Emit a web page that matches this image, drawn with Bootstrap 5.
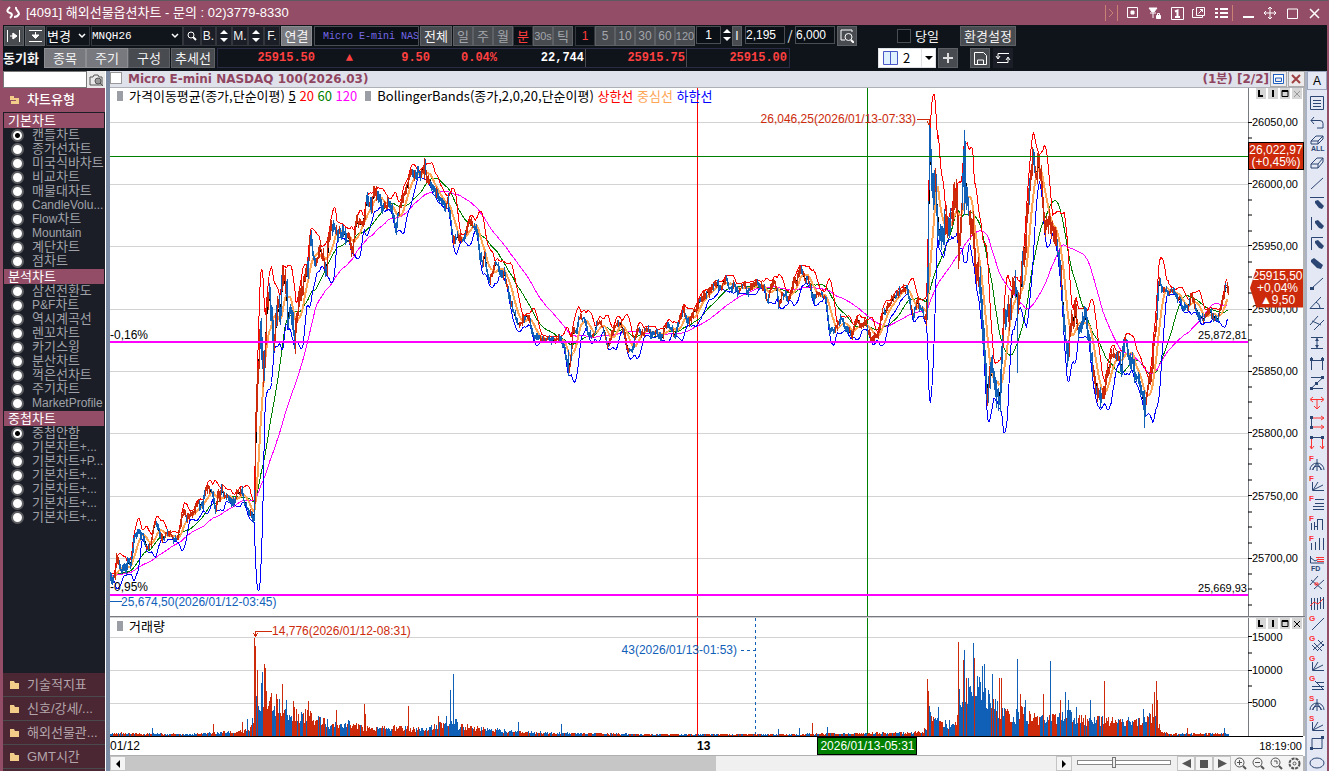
<!DOCTYPE html>
<html lang="ko">
<head>
<meta charset="utf-8">
<meta name="viewport" content="width=device-width, initial-scale=1">
<title>[4091] 해외선물옵션차트</title>
<link href="https://cdn.jsdelivr.net/npm/bootstrap@5.3.0/dist/css/bootstrap.min.css" rel="stylesheet">
<style>
:root{--plum:#944d66;--ink:#0f141b;--edge:#4a4d52;--navy:#2c4673;--red:#cc2a0a;--blue:#1060b8;}
body{font-family:"Liberation Sans","Noto Sans CJK KR",sans-serif;font-size:13px;line-height:14px;color:#000;background:#fff;height:100vh;overflow:hidden}
button,input,select{font:inherit;color:inherit;border-radius:0;padding:0;margin:0}
.app{height:100vh;border-top:1px solid #5c5a5e;border-left:3px solid var(--plum);border-right:2px solid var(--plum);background:var(--ink)}
.titlebar{height:24px;background:var(--plum);color:#fff;font-family:"Liberation Sans","Noto Sans CJK KR",sans-serif;margin-left:-3px;padding:0 2px 0 6px}
.titlebar button,.plain{background:none;border:0;display:flex;align-items:center;justify-content:center}
.titlebar button{width:22px;height:20px}
.titlebar .sep{width:1px;height:16px;background:#c98273}
.caption{margin-left:5px}
svg{display:block}
.tools{background:var(--ink);color:#f4f4f4;padding:1px 0 3px;font-family:"Noto Sans CJK KR",sans-serif}
.tools .bar{height:20px;display:flex;align-items:stretch;white-space:nowrap}
.tools .bar+.bar{margin-top:2px}
.tb{background:#484b50;border:1px solid #5d6065;color:#f4f4f4;height:20px;display:flex;align-items:center;justify-content:center;line-height:18px;flex:none}
.tb.lit{background:#77797e;border-color:#8c8e92}
.tb.dk{background:#1b1e26;border-color:#33363c}
.tb.dim{color:#a2a5aa}
.tb.sel{background:#0b1016;border-color:#34373c;color:#ff3d3d}
.tb.bare{background:#1b1e26;border:0}
.fld{background:#0b1016;border:1px solid var(--edge);color:#fff;height:18px;flex:none;min-width:0}
.fld.issue{color:#7468e8;height:20px}
.tick-box{appearance:none;width:14px;height:14px}
.tools select{appearance:none;background:#10151c url("data:image/svg+xml,%3Csvg xmlns='http://www.w3.org/2000/svg' width='8' height='6'%3E%3Cpath d='M1 1l3 3 3-3' stroke='white' stroke-width='1.5' fill='none'/%3E%3C/svg%3E") no-repeat right 3px center;border:1px solid #34373c;color:#fff;height:20px}
.tools select.cnt{background:none;color:#000;border:0;width:18px;height:18px}
.mono{font-family:"Liberation Mono",monospace;font-size:12px}
.mono10{font-family:"Liberation Mono",monospace;font-size:10px}
.mono11{font-family:"Liberation Mono",monospace;font-size:11px}
.nar{font-family:"Liberation Sans",sans-serif;font-size:12px}
.nar11{font-family:"Liberation Sans",sans-serif;font-size:11px}
.z10{width:10px}.z15{width:15px}.z16{width:16px}.z18{width:18px}.z20{width:20px}.z25{width:25px}.z31{width:31px}.z32{width:32px}.z40{width:40px}.z42{width:42px}.z44{width:44px}.z56{width:56px}.z92{width:92px}.z105{width:105px}
.g1{margin-left:1px}.g2{margin-left:2px}.g3{margin-left:3px}.g12{margin-left:12px}.g40{margin-left:40px}.g88{margin-left:88px}
.cfg{margin-left:21px}
.quote{border:1px solid #2b2b45;color:#ff4040;font-weight:700;display:grid;grid-template-columns:98px 45px 70px 67px 88px 101px 101px;width:573px}
.quote span{text-align:right;padding-right:1px;line-height:18px}
.quote .cut{border-right:1px solid #4a4a50}
.main{display:grid;grid-template-columns:102px 5px minmax(0,1fr) 22px;flex:1;min-height:0}
.side{background:#1b1e27;min-height:0;overflow:hidden;font-family:"Liberation Sans","Noto Sans CJK KR",sans-serif}
.side input[type=text]{width:84px;height:17px;border:1px solid #777;background:#fff}
.cam{width:18px;height:17px;background:#e9e9e9;border:0}
.cat{height:24px;background:var(--plum);color:#fff;font-weight:500;padding-left:6px}
.grp{height:15px;margin:1px 1px 0;background:var(--plum);color:#fff;padding-left:4px;line-height:15px;font-size:13px;font-weight:400}
.opt{height:14px;line-height:14px;color:#a0a2a9;padding-left:8px;display:flex;align-items:center;white-space:nowrap}
.opt .la{font-size:12px}
.opt input{appearance:none;width:13px;height:13px;flex:none;border-radius:50%;border:2px solid #5d5f62;background:#fff;margin-right:8px}
.opt input:checked{background:radial-gradient(circle,#000 0 2px,#fff 3px)}
.fold{height:24px;width:100%;border:0;border-bottom:1px solid #4a4a4c;background:#4b2734;color:#b3a5aa;text-align:left;padding-left:6px;display:flex;align-items:center;white-space:nowrap}
.fold svg,.cat svg{margin-right:6px}
.fold-end{height:2px;background:#4b2734}
.split{background:linear-gradient(90deg,#fff 0 1px,#7b8ba3 1px)}
.chartcol{background:#fff;min-width:0;min-height:0}
.chead{height:17px;background:#dfe1eb;border-bottom:1px solid #aeb0b5;color:#8f4560;font:700 12px/16px "DejaVu Sans","Noto Sans CJK KR",sans-serif}
.chead input{appearance:none;width:12px;height:12px;background:#fff;border:1px solid #999;margin:1px 6px 0 0}
.chead button{width:17px;height:16px;border:1px solid #aaa;background:#eceaea;margin-left:1px}
.pane{display:grid;grid-template-columns:minmax(0,1fr) 56px;min-height:0}
.pane.pr{flex:528 1 0}.pane.vo{flex:118 1 0}
.plot{position:relative;min-width:0;min-height:0;border-right:1px solid #777a80;overflow:hidden}
.plot>svg{position:absolute;inset:0;width:100%;height:100%;shape-rendering:crispEdges}
.ax{position:relative;font:12px/12px "Liberation Sans",sans-serif;border-right:2px solid #b5b5b5}
.ax .tick{position:absolute;left:-1px;display:flex;align-items:center;font-size:11px;transform:translateY(-50%)}
.ax .tick::before{content:"";width:4px;height:1px;background:#000}
.tag{position:absolute;white-space:nowrap;font:12px/12px "Liberation Sans",sans-serif;transform:translateY(-50%)}
.tag.sm{font-size:11px}
.tag.end{transform:translate(-100%,-50%)}
.keyline{position:absolute;white-space:nowrap;font:13px/16px "Noto Sans CJK KR",sans-serif;top:0;left:7px;display:flex;align-items:center}
.keyline i{width:6px;height:10px;background:#9c9ea6;margin-right:6px}
.px{position:absolute;left:-1px;width:56px;background:var(--red);color:#fff;text-align:center;font-size:12px;line-height:12px}
.px.hi{border:1px solid #000;height:28px;top:10.2%;padding-top:1px}
.px.now{height:39px;top:34.2%;clip-path:polygon(0 50%,12% 0,100% 0,100% 100%,12% 100%);left:1px;width:53px;padding-top:1px;padding-left:2px}
.mini{position:absolute;right:1px;top:0;display:flex;gap:2px}
.mini button{width:10px;height:11px;background:#d6d6d6;border:0}
.gap2px{height:2px;background:linear-gradient(#777a80 0 1px,#cfcfcf 1px)}
.taxis{height:20px;border-top:1px solid #000;border-bottom:1px solid #b0b0b0;position:relative;font:12px/18px "Liberation Sans",sans-serif;margin-right:2px;flex:none}
.taxis span,.taxis b{position:absolute;top:0}
.taxis .cur{background:#008000;color:#fff;border:1px solid #000;height:18px;line-height:17px;width:100px;text-align:center}
.foot{height:15px;background:#f0f0f0;border-right:2px solid #b5b5b5;flex:none}
.foot button{height:15px;border:1px solid #c4c4c4;background:#f4f4f4;flex:none}
.trk{background:#f0f0f0;flex:1}.thumb{width:63.4%;height:15px;background:#c6c6c6}
.foot input{appearance:none;width:94px;height:5px;margin:4px 6px 0 5px;border:1px solid #888;background:#fff}
.foot input::-webkit-slider-thumb{appearance:none;width:4px;height:11px;background:#eee;border:1px solid #777}
.rail{background:#e3e8f4;border-left:2px solid #a9b3c4;overflow:hidden}
.rail button{width:20px;height:20px;border:0;background:none;display:flex;align-items:center;justify-content:center}
.rail .first{height:19px;border:1px solid #9aa5bd;margin-bottom:3px;font:12px/14px "Liberation Sans",sans-serif}
</style>
</head>
<body>
<div class="app d-flex flex-column">
<header class="titlebar d-flex align-items-center flex-shrink-0">
<svg width="15" height="14" viewBox="0 0 15 14" fill="none" stroke="#fff" stroke-width="2"><path d="M4 1C0 5 1 6 4 7s2 3 0 5M10 1c-1 3 3 4 3 7-1 2-3 3-5 3"/></svg>
<span class="caption me-auto">[4091] 해외선물옵션차트 - 문의 : 02)3779-8330</span>
<span class="sep"></span><svg width="11" height="10" fill="none" stroke="#c98273"><path d="M3 1l4 4-4 4"/></svg><span class="sep me-1"></span>
<button aria-label="고정"><svg width="12" height="12" fill="none" stroke="#fff"><path d="M.5 .5h10v10h-10z"/><path fill="#fff" d="M4 4h3v3H4z"/></svg></button>
<button aria-label="잠금"><svg width="14" height="13" fill="#fff" stroke="#fff"><path d="M1 1h8L6 5H4zM2 6h6M5 6v5M8.5 8.500h4v3h-4z"/><path fill="none" d="M9.500 8V6.500h2V8"/></svg></button>
<button aria-label="화면 1"><svg width="13" height="13" fill="none" stroke="#fff"><path d="M.5 .5h12v12H.5z"/><path stroke-width="2" d="M4 4.500l2.500-1V10M4 10h5"/></svg></button>
<button aria-label="새 창"><svg width="14" height="12" fill="none" stroke="#fff"><path d="M4.500 .5h8v8h-8zM2 2.500H.5v8h10V9M6.500 6.500l4-4M8 2.500h2.500V5"/></svg></button>
<button aria-label="메뉴"><svg width="13" height="11" stroke="#fff" stroke-width="2"><path d="M0 1h3M5 1h8M0 5h3M5 5h8M0 9h3M5 9h8"/></svg></button>
<span class="sep"></span>
<button class="ms-1" aria-label="최소화"><svg width="11" height="11" stroke="#fff" stroke-width="2"><path d="M0 9h11"/></svg></button>
<button aria-label="이동"><svg width="12" height="12" fill="none" stroke="#fff"><path d="M6 0v12M0 6h12M4 2l2-2 2 2M4 10l2 2 2-2M2 4L0 6l2 2M10 4l2 2-2 2"/></svg></button>
<button aria-label="최대화"><svg width="11" height="11" fill="none" stroke="#fff"><path d="M.5 1h10v9.500H.5z"/></svg></button>
<button aria-label="닫기"><svg width="11" height="11" stroke="#fff" stroke-width="1.500"><path d="M1 1l9 9M10 1l-9 9"/></svg></button>
</header>
<div class="tools flex-shrink-0">
<div class="bar">
<button class="tb z20 g1" aria-label="가로"><svg width="14" height="12" fill="none" stroke="#fff"><path d="M.5 0v12M12.500 0v12M3 6h7M6 3v6" /><path fill="#fff" d="M6 3l4 3-4 3z"/></svg></button>
<button class="tb z20 g1" aria-label="세로"><svg width="13" height="12" stroke="#fff"><path d="M0 .5h13M0 11.500h13M6.500 2v3"/><path fill="#fff" d="M3 5h7L6.500 8.500z"/></svg></button>
<select class="z44 g1" aria-label="변경"><option>변경</option></select>
<select class="z92 g1 mono11" aria-label="종목코드"><option>MNQH26</option></select>
<button class="tb dk z18" aria-label="검색"><svg width="10" height="10" fill="none" stroke="#fff"><circle cx="4" cy="4" r="3"/><path stroke-width="2" d="M6 6l3 3"/></svg></button>
<button class="tb dk z15 nar">B.</button>
<button class="tb dk z16" aria-label="증감"><svg width="10" height="14" fill="#fff"><path d="M1 5l4-4 4 4zM1 9h8l-4 4z"/></svg></button>
<button class="tb dk z16 nar">M.</button>
<button class="tb dk z16" aria-label="증감"><svg width="10" height="14" fill="#fff"><path d="M1 5l4-4 4 4zM1 9h8l-4 4z"/></svg></button>
<button class="tb dk z16 nar">F.</button>
<button class="tb lit z31 g1">연결</button>
<input class="fld issue z105 g2 mono10 ps-2" value="Micro E-mini NASDAQ" aria-label="종목명">
<button class="tb z32 g1">전체</button><button class="tb dim z20 g1">일</button><button class="tb dim z20">주</button><button class="tb dim z20">월</button><button class="tb sel z20">분</button><button class="tb dim z20 nar11">30s</button><button class="tb dim z20">틱</button>
<button class="tb sel z20 g2 nar">1</button><button class="tb dim z20 nar">5</button><button class="tb dim z20 nar">10</button><button class="tb dim z20 nar">30</button><button class="tb dim z20 nar">60</button><button class="tb dim z20 nar11">120</button>
<input class="fld z25 g1 nar text-center" value="1" aria-label="간격">
<svg class="flex-shrink-0" width="11" height="18" fill="#fff"><path d="M2 7l4-4 4 4zM2 11h8l-4 4z"/></svg>
<button class="tb z10 nar">I</button>
<input class="fld z40 g3 nar" value="2,195" aria-label="조회 봉 수"><span class="z10 text-center align-self-center">/</span><input class="fld z40 nar" value="6,000" aria-label="전체 봉 수">
<button class="tb z20 g2" aria-label="영역 보기"><svg width="14" height="14" fill="none" stroke="#fff"><path d="M12 3V1H1v10h4"/><circle cx="8.500" cy="8" r="3.500"/><path stroke-width="2" d="M11 11l3 3"/></svg></button>
<label class="d-flex align-items-center g40"><input type="checkbox" class="fld tick-box me-1">당일</label>
<button class="tb z56 cfg">환경설정</button>
</div>
<div class="bar">
<b class="z40 align-self-center">동기화</b>
<button class="tb lit z42 g1">종목</button><button class="tb lit z42">주기</button><button class="tb z42">구성</button><button class="tb z44 g1">추세선</button>
<div class="quote mono g2"><span>25915.50</span><span class="pe-2">▲</span><span>9.50</span><span>0.04%</span><span class="cut text-white">22,744</span><span class="cut">25915.75</span><span>25915.00</span></div>
<span class="d-flex g88 bg-white text-black align-items-center border"><svg class="mx-1" width="16" height="14" fill="#dff0ff" stroke="#4a58c8"><path d="M.5 .5h14v13H.5zM7.500 0v14"/></svg><select class="cnt" aria-label="분할"><option>2</option></select><svg class="border-start h-100" width="14" height="18" fill="#000"><path d="M3 7h8l-4 4z"/></svg></span>
<button class="tb z20 g2" aria-label="추가"><svg width="12" height="12" stroke="#ddd" stroke-width="2"><path d="M6 1v10M1 6h10"/></svg></button>
<button class="tb z20 g12" aria-label="저장"><svg width="13" height="13" fill="none" stroke="#fff"><path d="M.5 .5h9l3 3v9H.5zM3.500 12V8h6v4"/></svg></button>
<button class="tb bare z20 g3" aria-label="동기"><svg width="16" height="14" fill="none" stroke="#fff"><path d="M14 2.500H3v5M1 5l2 3 2-3M2 11.500h11v-5M11 9l2-3 2 3"/></svg></button>
</div>
</div>
<div class="main">
<aside class="side d-flex flex-column">
<div class="d-flex"><input type="text" aria-label="지표 검색"><button class="cam plain" aria-label="지표 찾기"><svg width="16" height="14" fill="none" stroke="#555"><path d="M2 4h3l1-2h4l1 2h3v8H2z"/><circle cx="10" cy="8" r="3" fill="#999"/><path d="M12 10l3 3"/></svg></button></div>
<div class="cat d-flex align-items-center"><svg width="12" height="10" fill="#f2cc88"><path d="M1 1h4v2h5v6H2V6h5V5H1z"/></svg>차트유형</div>
<div id="lists"></div>
<div class="mt-auto" id="folds"></div>
</aside>
<div class="split"></div>
<section class="chartcol d-flex flex-column">
<div class="chead d-flex flex-shrink-0"><input type="checkbox" aria-label="차트 선택"><span class="me-auto">Micro E-mini NASDAQ 100(2026.03)</span><span>(1분) [2/2]</span>
<button class="plain g3" aria-label="창 복원"><svg width="13" height="12" fill="#fff" stroke="#1f5fc0"><path d="M1 1.500h11M1.500 2v8.500h10V2M3.500 5h6v3.500h-6z"/></svg></button><button class="plain" aria-label="창 닫기"><svg width="11" height="11" stroke="#a04040" stroke-width="2"><path d="M1 1l8 8M9 1l-8 8"/></svg></button></div>
<div class="pane pr"><div class="plot" id="price">
<div class="keyline"><i></i>가격이동평균(종가,단순이평)&nbsp;<u>5</u>&nbsp;<span style="color:red">20</span>&nbsp;<span style="color:green">60</span>&nbsp;<span style="color:#f0f">120</span><i class="ms-2"></i><span>BollingerBands</span>(종가,2,0,20,단순이평)&nbsp;<span style="color:red">상한선</span>&nbsp;<span style="color:#ffa555">중심선</span>&nbsp;<span style="color:#00f">하한선</span></div>
</div><div class="ax" id="pax"><div class="px hi">26,022,97<br>(+0,45%)</div><div class="px now">25915,50<br>+0,04%<br>▲9,50</div></div></div>
<div class="gap2px flex-shrink-0"></div>
<div class="pane vo"><div class="plot" id="vol"><div class="keyline"><i></i>거래량</div></div><div class="ax" id="vax"></div></div>
<div class="taxis"><span style="left:0">01/12</span><b style="left:49.200%">13</b><span class="cur" style="left:59.300%">2026/01/13-05:31</span><span class="nar11" style="right:1px">18:19:00</span></div>
<div class="foot d-flex">
<button class="z16 plain" aria-label="왼쪽"><svg width="6" height="8"><path d="M5 0v8L1 4z"/></svg></button>
<div class="trk"><div class="thumb"></div></div>
<button class="z16 plain" aria-label="오른쪽"><svg width="6" height="8"><path d="M1 0v8l4-4z"/></svg></button>
<input type="range" min="0" max="100" value="39" aria-label="배율">
<button class="z18 plain" aria-label="뒤로"><svg width="9" height="9" fill="#555"><path d="M9 0v9L0 4.500z"/></svg></button><button class="z18 plain" aria-label="정지"><svg width="8" height="8" fill="#555"><path d="M0 0h8v8H0z"/></svg></button><button class="z18 plain" aria-label="앞으로"><svg width="9" height="9" fill="#555"><path d="M0 0v9l9-4.500z"/></svg></button>
<button class="z18 plain border-0" aria-label="확대"><svg width="13" height="13" fill="none" stroke="#555"><circle cx="5.500" cy="5.500" r="4.500"/><path d="M3 5.500h5M5.500 3v5"/><path stroke-width="2" d="M9 9l3 3"/></svg></button><button class="z18 plain border-0" aria-label="축소"><svg width="13" height="13" fill="none" stroke="#555"><circle cx="5.500" cy="5.500" r="4.500"/><path d="M3 5.500h5"/><path stroke-width="2" d="M9 9l3 3"/></svg></button><button class="z18 plain border-0" aria-label="원래대로"><svg width="13" height="13" fill="none" stroke="#555"><circle cx="5.500" cy="5.500" r="4.500"/><path d="M4 4h3v3"/><path stroke-width="2" d="M9 9l3 3"/></svg></button><button class="z18 plain border-0" aria-label="설정"><svg width="13" height="13" fill="none" stroke="#555"><circle cx="6.500" cy="6.500" r="5" stroke-width="2" stroke-dasharray="3 1"/><circle cx="6.500" cy="6.500" r="1.500"/></svg></button>
</div>
</section>
<nav class="rail" id="rail" aria-label="그리기 도구"><button class="first">A</button></nav>
</div>
</div>
<script src="https://cdn.jsdelivr.net/npm/bootstrap@5.3.0/dist/js/bootstrap.bundle.min.js"></script>
<script>
const groups=[["기본차트",["캔들차트","종가선차트","미국식바차트","비교차트","매물대차트","CandleVolu...","Flow차트","Mountain","계단차트","점차트"]],["분석차트",["삼선전환도","P&F차트","역시계곡선","렌꼬차트","카기스윙","분산차트","꺽은선차트","주기차트","MarketProfile"]],["중첩차트",["중첩안함","기본차트+...","기본차트+P...","기본차트+...","기본차트+...","기본차트+...","기본차트+..."]]];
lists.innerHTML=groups.map(([g,o],i)=>`<h2 class="grp mb-0">${g}</h2>`+o.map((t,j)=>`<label class="opt"><input type="radio" name="g${i}"${j==0&&i!=1?' checked':''}><span>${t.replace('&','&amp;').replace(/[A-Za-z&;.+]+/g,'<span class="la">$&</span>')}</span></label>`).join('')).join('');
folds.innerHTML=["기술적지표","신호/강세/...","해외선물관...","GMT시간"].map(t=>`<button class="fold"><svg width="12" height="10" fill="#f2cc88"><path d="M1 1h4l1 2h4v6H1z"/></svg>${t}</button>`).join('')+'<div class="fold-end"></div>';

/* drawing tools: n = navy strokes, r = red strokes, t = letter, f = navy fill, b = letter below */
const fan="M1 15a7 7 0 0 1 14 0M4 15a4 4 0 0 1 8 0M8 4v12M8 8L3 15M8 8l5 7", rays="M3.500 7v8.500H15M4 15l5-8M4 15l10-5";
const pen="M6 6l3-1 6 6-2 3-3-1-4-5z";
const icons=[{n:"M1.500 1.500h13v13h-13zM4 5.500h8M4 8.500h8M4 11.500h8"},{n:"M2 5.500h9q3 0 3 3v4.500H8M5 2L2 5.500 5 9"},{n:"M2 6l5-5h7l-5 5zM2 6v3h7V6M9 9l5-5V1",t:"ALL",b:1},{n:"M2 9l6-6h6l-5 6zM2 9v4h7V9M9 13l5-6V3"},{n:"M2 14L14 3"},{n:"M1 2.500h14",f:pen},{n:"M2.500 2v13",f:pen},{n:"M2.500 15V2.500H14",f:pen},{f:"M2 5l3-2 9 7-2 4-4-1-6-6z"},{n:"M3 13L14 3",f:"M1 12h4v3H1z"},{n:"M15 13.500H1L12 2M7 7q4 2 4 6"},{n:"M1 10l8-9M5 15L15 5M3 6l9 4"},{n:"M2 2.500h12M2 13.500h12M8 3v10",f:"M6 6l2-3 2 3zM6 10l2 3 2-3z"},{n:"M2.500 2v13M13.500 2v13M3 5.500h10",f:"M1 3h3v3H1zM12 3h3v3h-3z"},{n:"M2 2.500h12L2 13.500h12",f:"M12 1h3v3h-3zM1 12h3v3H1zM6 7h3v3H6z"},{r:"M2 4.500h12M8 4v10M4 2L1 4.500 4 7M12 2l3 2.500L12 7M5 11l3 3 3-3"},{n:"M2.500 2v12",r:"M4 3h11M4 12h11M12 1l3 2-3 2M12 10l3 2-3 2",f:"M1 1h3v3H1zM1 11h3v3H1z"},{n:"M3 2.500h10",r:"M2.500 4v10M13.500 4v10M1 11l1.500 3L5 11M11 11l2.500 3 1.500-3",f:"M1 1h3v3H1zM12 1h3v3h-3z"},
{n:fan,t:"F"},{n:rays,t:"F"},{n:"M6 4.500h9M6 8.500h9M4 11.500h11M4 14.500h11",t:"F"},{n:"M2.500 8v7M5.500 7v8M5 11.500h4M8.500 4v11M8 4.500h5M13.500 4v11",t:"F"},{n:"M2.500 8v7M6.500 7v8M10.500 3v12M14.500 3v12",t:"F"},{n:"M1.500 1v7H15M2 3l4 3 4-2",r:"M7 2.500h8M8 6.500h7M8 4.500h7",t:"FD",b:1},{n:"M1 10l8-9M5 14L15 5M2 5l11 9",r:"M6 8h3v2H6z"},{n:"M2.500 3v12M5.500 3v12M8.500 3v12M11.500 2v12M14.500 2v12",r:"M1 11l4-4 4 2 5-5"},{n:"M3 15L15 3",t:"G"},{n:"M4 15L14 6M8 16l7-7M5 8l8 8M3 10l5 5M9 5l6 6",t:"G"},{n:rays,t:"G"},{n:"M7 7.500h8M3 11.500h12M3 14.500h12M6 6l8 8",t:"G"},{n:fan,t:"S"},{n:rays,t:"S"},{n:"M3 3.500h10v10H3z",f:"M1 12h3v3H1zM12 1h3v3h-3z"},{n:"M1 8a7 5 0 1 0 14 0a7 5 0 1 0-14 0"}];
rail.insertAdjacentHTML('beforeend',icons.map((o,i)=>`<button aria-label="도구 ${i+1}"><svg width="16" height="17" viewBox="0 0 16 17" fill="none"><path d="${o.n||''}" stroke="#2c4673"/><path d="${o.r||''}" stroke="#f33"/><path d="${o.f||''}" fill="#2c4673"/>${o.t?`<text x="${o.b?2:0}" y="${o.b?16:6}" font-size="${o.b?7:8}" font-weight="700" font-family="Liberation Sans,sans-serif" fill="${o.b?'#2c4673':'#f33'}">${o.t}</text>`:''}</svg></button>`).join(''));

/* closing path as x,y pairs; X0,Y0 is the plot origin of those values */
const X0=110,Y0=88;
const P="30,575 70,578 80,572 95,574 110,578 112,580 114,574 116,556 118,563 121,572 123,566 125,571 127,560 129,566 131,558 133,537 136,534 138,531 140,537 142,533 144,541 147,550 150,545 152,535 154,522 157,528 160,536 163,540 165,533 168,538 170,533 173,539 176,540 178,533 181,514 184,512 186,518 189,514 192,513 195,507 197,501 199,505 202,508 204,492 207,488 210,491 212,494 215,512 217,492 219,500 221,489 224,498 227,494 230,502 233,503 236,492 238,495 241,492 243,500 246,506 249,513 251,516 253,522 254,518 255,433 256,400 258,357 260,327 262,367 263,380 265,340 266,300 268,297 271,307 273,337 275,327 278,300 279,317 281,293 283,273 286,293 287,327 289,307 292,323 294,340 296,320 298,303 300,290 302,290 304,280 307,273 308,250 310,237 312,253 314,263 317,257 319,250 322,253 324,267 326,273 327,247 330,227 333,228 335,227 337,237 338,225 340,237 343,230 345,240 348,238 352,253 353,237 356,223 358,227 362,222 364,212 366,200 368,203 371,208 373,192 377,195 380,203 383,208 387,200 390,208 393,218 395,227 397,217 400,207 403,195 407,185 410,170 413,173 417,173 420,175 424,165 426,177 429,180 432,190 435,193 438,200 442,202 445,208 447,200 450,223 452,237 455,240 458,237 462,238 464,238 466,228 468,220 472,225 475,228 477,237 479,257 482,263 484,250 486,273 488,283 491,273 493,265 497,265 500,275 503,273 507,288 510,303 513,313 517,325 520,322 523,320 526,315 529,322 533,337 537,337 542,340 548,337 553,341 558,337 563,345 566,363 568,372 569,363 571,347 572,327 576,332 578,317 580,318 584,318 587,332 591,337 594,332 597,322 602,325 605,337 608,346 613,327 619,322 623,332 626,347 631,352 634,340 637,330 642,333 646,327 650,335 656,330 661,340 665,325 670,328 674,335 678,323 683,308 685,318 688,323 692,313 697,307 700,298 707,293 712,287 715,283 719,288 723,283 725,275 728,290 733,285 738,292 742,283 747,292 753,283 758,285 763,288 767,303 769,290 773,283 776,287 778,308 781,295 785,295 789,300 793,277 795,283 800,268 803,277 807,280 810,287 813,303 815,295 820,293 825,297 828,327 831,330 835,330 840,318 845,328 851,335 856,318 860,327 865,322 869,337 873,337 877,335 882,312 887,307 892,298 898,292 905,288 908,295 912,315 917,302 921,310 925,320 926,307 927,280 928,200 929,133 930,150 931,177 933,203 934,183 937,217 939,243 942,227 947,223 951,220 953,203 956,193 958,250 960,223 962,190 964,143 965,203 967,203 969,223 972,230 975,277 978,273 980,297 982,323 984,357 987,397 989,383 992,363 995,387 999,400 1001,363 1003,317 1006,317 1010,303 1013,287 1017,303 1020,287 1023,257 1026,223 1028,193 1032,157 1035,170 1038,167 1042,193 1044,233 1047,220 1051,230 1055,237 1058,263 1061,283 1063,323 1067,357 1070,330 1074,310 1078,337 1082,320 1084,313 1088,337 1092,370 1095,383 1100,400 1103,390 1107,370 1110,357 1115,360 1118,353 1121,370 1123,343 1125,340 1128,363 1132,360 1134,377 1138,380 1142,397 1144,415 1147,390 1151,370 1153,343 1156,317 1158,280 1161,287 1163,290 1168,293 1172,290 1177,297 1182,308 1187,308 1191,293 1195,310 1202,320 1208,310 1213,317 1217,318 1221,303 1225,287 1228,290".split(' ').map(s=>s.split(',').map(Number));
let seed=7;const rnd=()=>(seed=(seed*16807)%2147483647)/2147483647;
const lerp=(a,x)=>{let i=1;while(i<a.length-1&&a[i][0]<x)i++;const[p,q]=[a[i-1],a[i]];return p[1]+(q[1]-p[1])*Math.max(0,Math.min(1,(x-p[0])/(q[0]-p[0])))};
const amp=[[80,8],[250,8],[256,30],[290,22],[320,13],[450,10],[530,7],[700,8],[924,8],[928,34],[960,26],[1000,32],[1060,20],[1120,15],[1152,14],[1165,8],[1228,9]];
const step=.51,xs=[],c=[];
for(let x=40;x<=1228;x+=step){xs.push(x);c.push(lerp(P,x)+(rnd()-.5)*lerp(amp,x)*.6)}
const avg=(n,i)=>{let s=0,k=0;for(let j=Math.max(0,i-n+1);j<=i;j++){s+=c[j];k++}return s/k};
const sd=(i)=>{const m=avg(20,i);let s=0,k=0;for(let j=Math.max(0,i-19);j<=i;j++){s+=(c[j]-m)**2;k++}return Math.sqrt(s/k)};
const line=(f,col,w=1)=>{let d='';xs.forEach((x,i)=>{if(x>=X0&&i%2==0)d+=(d?'L':'M')+(x-X0).toFixed(1)+' '+(f(i)-Y0).toFixed(1)});return`<path d="${d}" fill="none" stroke="${col}" stroke-width="${w}"/>`};
let up='',dn='',run=false;
for(let x=X0;x<=1228;x++){const i=Math.round((x-40)/step),a=lerp(amp,x),o=c[i-2]??c[i],e=c[i];let hi=Math.min(o,e)-rnd()*a*.5,lo=Math.max(o,e)+rnd()*a*.5;
 const w={929:[122,190],964:[130,215],424:[158,180],1144:[390,428],1017:[290,373],958:[215,269],568:[350,376]}[x];if(w)[hi,lo]=w;
 const s=`M${x-X0+.5} ${(hi-Y0).toFixed()}V${(lo-Y0).toFixed()}`;if(rnd()<.55)run=lerp(P,x)<lerp(P,x-2)?rnd()<.8:rnd()<.3;run?up+=s:dn+=s}
const hl=(y,c,w=1,W=1138)=>`<path d="M0 ${y}H${W}" stroke="${c}" stroke-width="${w}"/>`;
const ys=[122,184,246,309,371,433,496,558];
price.insertAdjacentHTML('afterbegin',`<svg viewBox="0 0 1138 528" preserveAspectRatio="none">${ys.map(y=>hl(y-Y0+.5,'#d3d3d3')).join('')}
<path d="M587.500 0V528" stroke="red"/><path d="M757.500 0V528" stroke="green"/>
${line(i=>avg(5,i),'#000',1)}${line(i=>avg(60,i),'green')}${line(i=>avg(120,i),'#f0f')}${line(i=>avg(20,i)-2*sd(i),'red')}${line(i=>avg(20,i)+2*sd(i),'#00f')}${line(i=>avg(20,i),'#ffa555',2)}
<path d="${up}" stroke="#cc2a0a"/><path d="${dn}" stroke="#1060b8"/>${hl(68.5,'green')}${hl(254,'#f0f',2)}${hl(507,'#f0f',2)}
<path d="M807 31.500h12v4m-2-2l2 3 2-3" stroke="#cc2a0a" fill="none"/><path d="M0 513.500h12" stroke="#1060b8"/></svg>`);
const tag=(el,x,y,t,col,H,cls='')=>el.insertAdjacentHTML('beforeend',`<span class="tag ${cls}" style="left:${(x/11.38).toFixed(2)}%;top:${(y/H*100).toFixed(2)}%;color:${col}">${t}</span>`);
tag(price,806,31,'26,046,25(2026/01/13-07:33)','#cc2a0a',528,'end');tag(price,0,247,'-0,16%','#000',528);tag(price,0,499,'-0,95%','#000',528);
tag(price,11,514,'25,674,50(2026/01/12-03:45)','#1060b8',528);tag(price,1137,247,'25,872,81','#000',528,'end sm');tag(price,1137,500,'25,669,93','#000',528,'end sm');
const tick=(el,y,t,H)=>el.insertAdjacentHTML('afterbegin',`<span class="tick" style="top:${(y/H*100).toFixed(2)}%">${t}</span>`);
ys.forEach((y,i)=>{tick(pax,y-Y0,(26050-50*i)+',00',528);for(let k=1;k<4;k++)if(y+k*16<610)tick(pax,y-Y0+k*15.600,'',528)});
[['15000',19],['10000',52],['5000',85]].forEach(([t,y])=>{tick(vax,y,t,118);if(y<80)tick(vax,y+16,'',118)});

/* volume: typical height by x, with the single tall bars listed apart */
const env=[[110,3],[190,2],[240,5],[250,8],[253,20],[256,50],[262,42],[270,32],[290,26],[310,21],[330,12],[350,13],[365,8],[400,9],[420,7],[440,12],[452,20],[458,11],[480,8],[510,5],[560,3],[650,2],[800,2],[920,4],[926,8],[929,26],[937,15],[955,12],[960,48],[970,52],[985,44],[1000,30],[1012,20],[1022,25],[1040,16],[1060,24],[1080,18],[1120,15],[1142,16],[1155,26],[1160,6],[1170,2],[1228,3]];
const peak={152:8,213:12,242:14,247:17,254:98,255:90,257:66,262:64,264:72,265:68,271:43,276:42,282:52,286:36,293:35,308:35,336:26,364:32,365:22,408:30,438:20,450:46,453:62,518:14,561:12,778:7,812:13,827:9,799:8,927:57,928:45,938:29,958:94,963:76,964:86,966:58,968:58,973:93,974:78,982:70,984:72,992:62,999:58,1001:58,1017:77,1020:42,1025:36,1043:42,1050:75,1060:36,1065:44,1068:36,1076:29,1090:36,1104:55,1143:27,1152:32,1154:44,1156:55,1157:36,1187:8,1224:8};
const tallBlue=new Set([262,453,973,982,992,1017,1050,1065,1090]),tallRed=new Set([254,255,257,264,265,282,364,927,928,958,963,974,999,1001,1104,1154,1156,1157]);
let vr='',vb='',vc=true;for(let x=110;x<=1228;x++){const h=peak[x]||Math.max(1,Math.round(lerp(env,x)*(.55+rnd()*.7)));const s=`M${x-X0+.5} 118v-${h}`;if(rnd()<.6)vc=rnd()<(x>955&&x<1000?.25:.55);(tallBlue.has(x)?false:tallRed.has(x)||vc)?vr+=s:vb+=s}
vol.insertAdjacentHTML('afterbegin',`<svg viewBox="0 0 1138 118" preserveAspectRatio="none">${[19.5,52.5,85.5].map(y=>hl(y,'#d3d3d3')).join('')}<path d="M587.500 0V118" stroke="red"/><path d="M757.500 0V118" stroke="green"/><path d="M645.500 0V118M631 32.500h14" stroke="#1060b8" stroke-dasharray="3 3"/><path d="${vr}" stroke="#cc2a0a"/><path d="${vb}" stroke="#1060b8"/><path d="M162 13.500h-16.500v4m-2-2l2 3 2-3" stroke="#cc2a0a" fill="none"/></svg>`);
tag(vol,162,13,'14,776(2026/01/12-08:31)','#cc2a0a',118);tag(vol,627,32,'43(2026/01/13-01:53)','#1060b8',118,'end');
[pax,vax].forEach((e,k)=>e.insertAdjacentHTML('beforeend',`<div class="mini">${['M3 2v6h4','M5 2v7','M2 2.500h6v6H2zM2 3.500h6','M2 3l6 6M8 3l-6 6'].map((d,i)=>`<button class="plain" aria-label="창 ${i+1}"><svg width="10" height="11" fill="none" stroke="${i==3&&!k?'#999':'#000'}" stroke-width="${i<2?2:1}"><path d="${d}"/></svg></button>`).join('')}</div>`));
document.querySelectorAll('.mini button').forEach(b=>b.style.background='#d6d6d6');
</script>
</body>
</html>
